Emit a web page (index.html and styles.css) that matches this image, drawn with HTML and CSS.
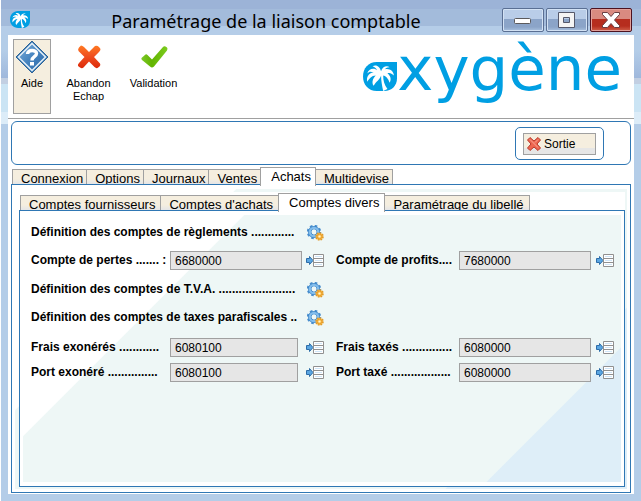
FILE: index.html
```html
<!DOCTYPE html>
<html lang="fr">
<head>
<meta charset="utf-8">
<meta name="viewport" content="width=device-width, initial-scale=1">
<title>Paramétrage de la liaison comptable</title>
<link rel="stylesheet" href="styles.css">
</head>
<body>
<svg class="defs" aria-hidden="true">
  <defs>
    <linearGradient id="gRed" x1="0" y1="0" x2="0" y2="1"><stop offset="0" stop-color="#ff7a22"/><stop offset=".45" stop-color="#f05020"/><stop offset="1" stop-color="#dc2a0a"/></linearGradient>
    <linearGradient id="gGreen" x1="0" y1="0" x2="1" y2="0"><stop offset="0" stop-color="#7cc828"/><stop offset=".4" stop-color="#62b400"/><stop offset="1" stop-color="#7ccc1e"/></linearGradient>
    <linearGradient id="gBlue" x1="0" y1="0" x2="1" y2="1"><stop offset="0" stop-color="#7fb0da"/><stop offset=".5" stop-color="#4583bf"/><stop offset="1" stop-color="#2d69a8"/></linearGradient>
    <symbol id="palm" viewBox="0 0 32 28" preserveAspectRatio="none">
      <path fill="#009fe3" d="M13 0H32V16C32 23 27 28 20 28H13C5 28 0 22 0 14S5 0 13 0Z"/>
      <path fill="#fff" d="M17 9C18 5 22 3 25 5C22 5 21 6 21 7C25 6 29 9 29 13C27 11 25 10 23 11C26 13 27 17 25 20C24 16 21 13 19 13C19 18 20 22 23 26L19 28C18 23 17 18 17 13C16 17 12 19 10 23C8 20 9 16 12 13C8 13 6 16 4 19C3 15 5 11 10 10C7 9 6 9 4 11C5 7 10 5 13 8C13 6 11 5 9 4C13 2 16 5 17 9Z"/>
    </symbol>
    <symbol id="gears" viewBox="0 0 17 16">
      <circle cx="7" cy="7" r="6" fill="none" stroke="#4a8fce" stroke-width="2.4" stroke-dasharray="2.500 2.210"/>
      <circle cx="7" cy="7" r="4.200" fill="none" stroke="#3f86c8" stroke-width="3.600"/>
      <circle cx="7" cy="7" r="4.200" fill="none" stroke="#82bdec" stroke-width="2.200"/>
      <circle cx="7" cy="7" r="2.400" fill="#eef7f6"/>
      <circle cx="12.500" cy="11.500" r="3.500" fill="#fbc34a" stroke="#e09a2c" stroke-width="1.600" stroke-dasharray="1.600 1.100"/>
      <circle cx="12.500" cy="11.500" r="2.300" fill="none" stroke="#e5952a" stroke-width=".8"/>
      <circle cx="12.500" cy="11.500" r="1.100" fill="#fff4d8"/>
    </symbol>
    <symbol id="pick" viewBox="0 0 19 13">
      <path fill="#5aa6e2" stroke="#2c6ca8" d="M.5 4.500H3.500V2.500L7 6.500L3.500 10.500V8.500H.5Z"/>
      <path fill="#fff" stroke="#909090" d="M7.500.5H17.500V12.500H7.500Z"/>
      <path stroke="#cfe6f8" d="M9 2.500H16M9 6.500H16M9 10.500H16"/>
      <path stroke="#909090" d="M8 4.500H17M8 8.500H17"/>
    </symbol>
  </defs>
</svg>

<main class="window">
  <header class="titlebar">
    <svg class="app-icon" aria-hidden="true"><use href="#palm"/></svg>
    <h1 class="title">Paramétrage de la liaison comptable</h1>
    <div class="controls">
      <button class="control" type="button" aria-label="Réduire"><svg viewBox="0 0 40 22"><rect x="11.500" y="9.500" width="16" height="5" rx="1" fill="#fff" stroke="#5c5a5c"/></svg></button>
      <button class="control" type="button" aria-label="Agrandir"><svg viewBox="0 0 40 22"><path fill="#f4f4f4" fill-rule="evenodd" stroke="#55586a" d="M11.500 3.500H27.500V18.500H11.500ZM16.500 8.500V13.500H22.500V8.500Z"/></svg></button>
      <button class="control control-close" type="button" aria-label="Fermer"><svg viewBox="0 0 40 22"><path fill="#fff" stroke="#6a3f42" stroke-linejoin="round" d="M11.500 3.500H16.500L20 7.500L23.500 3.500H28.500V5.500L23.500 11L28.500 16.500V18.500H23.500L20 14.500L16.500 18.500H11.500V16.500L16.500 11L11.500 5.500Z"/></svg></button>
    </div>
  </header>

  <div class="client">
    <div class="toolbar">
      <button class="tool tool-active" type="button">
        <svg class="tool-icon" viewBox="0 0 34 34" aria-hidden="true">
          <path fill="#3f7fb9" stroke="#2d6295" stroke-linejoin="round" d="M17 1L33 17L17 33L1 17Z"/>
          <path fill="url(#gBlue)" stroke="#e6f0f8" stroke-width="1.500" d="M17 3.500L30.500 17L17 30.500L3.500 17Z"/>
          <path fill="none" stroke="#fff" stroke-width="3.400" d="M12.500 14C12.500 9.500 21.500 9.500 21.500 13.500C21.500 17 17 16.500 17 20.500"/>
          <rect x="15" y="22" width="4" height="3.500" fill="#fff"/>
        </svg>
        <span>Aide</span>
      </button>
      <button class="tool" type="button">
        <svg class="tool-icon" viewBox="0 0 34 34" aria-hidden="true"><path fill="url(#gRed)" d="M9 5.500Q10.500 5.500 12 7L17 12L23 6Q25 5 27 7L28.500 9Q28.500 10.500 27 12L22 17L28 23.500Q29 25 27.500 26.500L25.500 28Q24 28.500 22.500 27L17 21.500L11.500 27.500Q10 29 8 27.500L6 26Q5.500 24.500 7 23L12.500 17L6.500 11Q5.500 9 7 7.500Z"/></svg>
        <span>Abandon<br>Echap</span>
      </button>
      <button class="tool" type="button">
        <svg class="tool-icon" viewBox="0 0 34 34" aria-hidden="true"><path fill="url(#gGreen)" d="M4.500 18L8.500 14.500Q9.500 14 10.500 15L15 19.500L26 7Q27 6 28.500 6.500L30 7.500Q31 8.500 30 10.500L17 26.500Q15 28.500 13 26.500L5 20Q4 19 4.500 18Z"/></svg>
        <span>Validation</span>
      </button>
      <div class="brand" role="img" aria-label="oxygène">
        <svg class="brand-icon" aria-hidden="true"><use href="#palm"/></svg>
        <span class="brand-text">xygène</span>
      </div>
    </div>

    <div class="actions">
      <div class="exit-group">
        <button class="exit" type="button">
          <svg viewBox="0 0 16 16" width="16" height="16" aria-hidden="true"><path fill="#ee6650" stroke="#b83a2c" stroke-linejoin="round" d="M4 1.500L8 5L12 1.500L14.500 4L11 8L14.500 12L12 14.500L8 11L4 14.500L1.500 12L5 8L1.500 4Z"/><path stroke="#f8a898" d="M4 3.500L12 11.500M12 3.500L9 6.500"/></svg>
          Sortie
        </button>
      </div>
    </div>

    <nav class="tabs" role="tablist" aria-label="Sections">
      <button class="tab" role="tab" type="button">Connexion</button>
      <button class="tab" role="tab" type="button">Options</button>
      <button class="tab" role="tab" type="button">Journaux</button>
      <button class="tab" role="tab" type="button">Ventes</button>
      <button class="tab selected" role="tab" type="button" aria-selected="true">Achats</button>
      <button class="tab" role="tab" type="button">Multidevise</button>
    </nav>

    <section class="panel outer">
      <div class="shade">
        <nav class="tabs subtabs" role="tablist" aria-label="Achats">
          <button class="tab" role="tab" type="button">Comptes fournisseurs</button>
          <button class="tab" role="tab" type="button">Comptes d'achats</button>
          <button class="tab selected" role="tab" type="button" aria-selected="true">Comptes divers</button>
          <button class="tab" role="tab" type="button">Paramétrage du libellé</button>
        </nav>
        <div class="panel inner">
          <form class="shade form">
            <div class="line setup">
              <span class="caption">Définition des comptes de règlements .............</span>
              <button class="icon" type="button" aria-label="Configurer les règlements"><svg width="17" height="16"><use href="#gears"/></svg></button>
            </div>
            <div class="line fields">
              <label for="pertes">Compte de pertes ....... :</label>
              <input id="pertes" class="wide" value="6680000">
              <button class="icon" type="button" aria-label="Choisir"><svg width="19" height="13"><use href="#pick"/></svg></button>
              <label for="profits">Compte de profits....</label>
              <input id="profits" class="wide" value="7680000">
              <button class="icon" type="button" aria-label="Choisir"><svg width="19" height="13"><use href="#pick"/></svg></button>
            </div>
            <div class="line setup">
              <span class="caption">Définition des comptes de T.V.A. .......................</span>
              <button class="icon" type="button" aria-label="Configurer la T.V.A."><svg width="17" height="16"><use href="#gears"/></svg></button>
            </div>
            <div class="line setup">
              <span class="caption">Définition des comptes de taxes parafiscales ..</span>
              <button class="icon" type="button" aria-label="Configurer les taxes parafiscales"><svg width="17" height="16"><use href="#gears"/></svg></button>
            </div>
            <div class="line fields group">
              <label for="frais-ex">Frais exonérés ............</label>
              <input id="frais-ex" value="6080100">
              <button class="icon" type="button" aria-label="Choisir"><svg width="19" height="13"><use href="#pick"/></svg></button>
              <label for="frais-tx">Frais taxés ...............</label>
              <input id="frais-tx" class="wide" value="6080000">
              <button class="icon" type="button" aria-label="Choisir"><svg width="19" height="13"><use href="#pick"/></svg></button>
            </div>
            <div class="line fields">
              <label for="port-ex">Port exonéré ...............</label>
              <input id="port-ex" value="6080100">
              <button class="icon" type="button" aria-label="Choisir"><svg width="19" height="13"><use href="#pick"/></svg></button>
              <label for="port-tx">Port taxé ..................</label>
              <input id="port-tx" class="wide" value="6080000">
              <button class="icon" type="button" aria-label="Choisir"><svg width="19" height="13"><use href="#pick"/></svg></button>
            </div>
          </form>
        </div>
      </div>
    </section>
  </div>
</main>
</body>
</html>
```
FILE: styles.css
```css
* { box-sizing: border-box; }

body {
  margin: 0;
  background: #fff;
  color: #000;
  font-family: "Liberation Sans", Arial, sans-serif;
  font-size: 12px;
}

button, input { font: inherit; color: inherit; margin: 0; }
button { padding: 0; border: 0; background: none; }
svg { display: block; }
.defs { position: absolute; width: 0; height: 0; }

/* Window frame */
.window {
  display: flex;
  flex-direction: column;
  min-height: 100vh;
  margin-left: 1px;
  padding: 0 7px 7px;
  background: linear-gradient(#b4cde8 50px, #9fb8dc 78px, #c2cfe2 78px 84px, #cbe4f4 84px 112px, #dcecf8 112px 124px, #b4cde8 124px);
}

.titlebar {
  display: flex;
  align-items: center;
  height: 35px;
  margin: 0 -7px;
  padding: 0 9px;
  background: linear-gradient(#9cb3d7 0 9px, #a3bbdb 9px 26px, #b5cde8 26px);
}

.app-icon { flex: none; width: 20px; height: 17px; margin-top: 4px; }

.title {
  flex: 1;
  margin: 6px 0 0;
  font: 400 18px/28px "Noto Sans", "Open Sans", sans-serif;
  text-align: center;
}

.controls { display: flex; gap: 2px; margin-top: 5px; }

.control {
  width: 42px;
  height: 24px;
  border: 1px solid #5a6f93;
  border-radius: 2px;
  box-shadow: inset 0 0 0 1px #d3e2f4;
  background: linear-gradient(#b9cde8 0 10px, #8ba4c8 10px 18px, #aac2e0);
}

.control svg { width: 100%; height: 100%; }

.control-close {
  border-color: #4d1220;
  box-shadow: inset 0 0 0 1px #e2a09a;
  background: linear-gradient(#d98a80 0 10px, #b62d1e 10px 17px, #d0604a);
}

.client {
  flex: 1;
  display: flex;
  flex-direction: column;
  padding-bottom: 1px;
  background: #fff;
}

/* Toolbar */
.toolbar {
  display: flex;
  height: 84px;
  padding: 4px 12px 4px 5px;
  border-bottom: 1px solid #a0a0a0;
  font-size: 11px;
  line-height: 13px;
}

.tool {
  display: flex;
  flex-direction: column;
  align-items: center;
  width: 65px;
  gap: 3px;
  padding-top: 1px;
}

.tool-active { width: 38px; margin-right: 5px; border: 1px solid #a0a0a0; background: #f5eedf; padding-top: 0; }
.tool-icon { width: 34px; height: 34px; flex: none; }

.brand {
  display: flex;
  align-items: flex-start;
  margin-left: auto;
  color: #009fe3;
}

.brand-icon { width: 34px; height: 29px; margin-top: 23px; }
.brand-text { font: 61px/60px "DejaVu Sans", sans-serif; }

/* Action strip */
.actions {
  display: flex;
  justify-content: flex-end;
  margin: 2px 3px 0;
  padding: 5px 26px 4px;
  border: 1px solid #2f77b4;
  border-radius: 6px;
}

.exit-group { padding: 5px 7px 4px; border: 1px solid #2f77b4; border-radius: 5px; }

.exit {
  display: flex;
  align-items: center;
  gap: 2px;
  width: 73px;
  height: 22px;
  padding: 0 2px;
  border: 1px solid #a0a0a0;
  background: linear-gradient(#f5eedf 70%, #e6e6e6 70%);
}

/* Tabs */
.tabs {
  display: flex;
  align-items: flex-end;
  height: 18px;
  margin: 2px 3px -1px;
  padding-left: 1px;
}

.tab {
  height: 16px;
  padding: 0 3px 0 8px;
  border: 1px solid #a0a0a0;
  border-bottom: 0;
  border-left-width: 0;
  background: linear-gradient(#f5eedf 60%, #e6e6e6 90%);
  font-size: 13px;
  line-height: 18px;
  white-space: nowrap;
  overflow: hidden;
}

.tab:first-child { border-left-width: 1px; }

.tab.selected {
  position: relative;
  z-index: 1;
  height: 19px;
  margin: 0 0 -1px -1px;
  padding: 0 4px 0 10px;
  border-left-width: 1px;
  background: #fff;
}

/* Framed pages */
.panel { display: flex; flex: 1; border: 1px solid #2f77b4; background: #fff; }

.shade {
  flex: 1;
  min-width: 0;
  background: linear-gradient(135deg, #fff 156px, #eef7f6 157px 516px, #deeef8 517px);
}

.outer { margin: 0 3px; padding: 4px 3px 3px; }
.outer > .shade { display: flex; flex-direction: column; padding: 3px 2px 2px 4px; }
.subtabs { margin: 0 0 -1px; background: #fff; height: 19px; }
.subtabs .tab { padding-right: 5px; }
.inner { padding: 4px 3px; }

/* Account form */
.form { padding: 8px; font-size: 12px; line-height: 15px; }
.line { display: flex; align-items: center; height: 19px; font-weight: bold; white-space: nowrap; }
.setup + .fields, .setup + .setup { margin-top: 9px; }
.fields + .setup { margin-top: 10px; }
.setup + .group { margin-top: 11px; }
.fields + .fields { margin-top: 6px; }

.caption { width: 276px; }
.fields { display: grid; grid-template-columns: 139px 136px 30px 123px 137px 20px; }

.fields input {
  width: 128px;
  height: 19px;
  padding: 0 4px;
  border: 1px solid #a0a0a0;
  border-radius: 0;
  background: #e6e6e6;
  font-weight: normal;
}

.fields input.wide { width: 132px; }
```
